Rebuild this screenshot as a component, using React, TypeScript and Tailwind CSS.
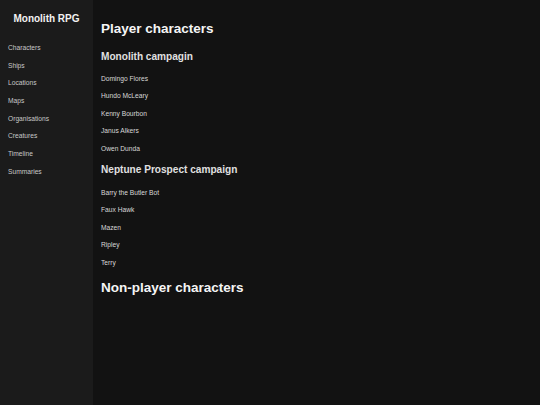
import React from "react";

const nav = ["Characters", "Ships", "Locations", "Maps", "Organisations", "Creatures", "Timeline", "Summaries"];
const monolith = ["Domingo Flores", "Hundo McLeary", "Kenny Bourbon", "Janus Alkers", "Owen Dunda"];
const neptune = ["Barry the Butler Bot", "Faux Hawk", "Mazen", "Ripley", "Terry"];

export default function App() {
  return (
    <div className="flex h-[405px] w-[540px] overflow-hidden bg-[#121212] text-[#dddddd]" style={{ fontFamily: '"Liberation Sans", Arial, sans-serif' }}>
      <aside className="flex w-[93px] shrink-0 flex-col bg-[#1b1b1b]">
        <div className="pt-[13px] text-center text-[10px] font-bold leading-[12px] text-[#f2f2f2]">Monolith RPG</div>
        <ul className="mt-[13.8px] flex flex-col pl-[8px]">
          {nav.map((n) => (
            <li key={n} className="h-[17.73px] text-[6.67px] leading-[17.73px] text-[#c8c8c8]">{n}</li>
          ))}
        </ul>
      </aside>
      <main className="flex flex-1 flex-col pl-[8px] pt-[20.5px]">
        <h1 className="mb-[8.2px] text-[13.5px] font-bold leading-[16px] text-[#f5f5f5]">Player characters</h1>
        <h2 className="mt-[5px] mb-[6px] text-[10.1px] font-bold leading-[14px] text-[#e0e0e0]">Monolith campagin</h2>
        <ul className="flex flex-col">
          {monolith.map((n) => (
            <li key={n} className="h-[17.6px] text-[6.67px] leading-[17.6px] text-[#d8d8d8]">{n}</li>
          ))}
        </ul>
        <h2 className="mt-[5px] mb-[7px] text-[10.1px] font-bold leading-[14px] text-[#e0e0e0]">Neptune Prospect campaign</h2>
        <ul className="flex flex-col">
          {neptune.map((n) => (
            <li key={n} className="h-[17.6px] text-[6.67px] leading-[17.6px] text-[#d8d8d8]">{n}</li>
          ))}
        </ul>
        <h1 className="mt-[8px] text-[13.5px] font-bold leading-[16px] text-[#f5f5f5]">Non-player characters</h1>
      </main>
    </div>
  );
}
